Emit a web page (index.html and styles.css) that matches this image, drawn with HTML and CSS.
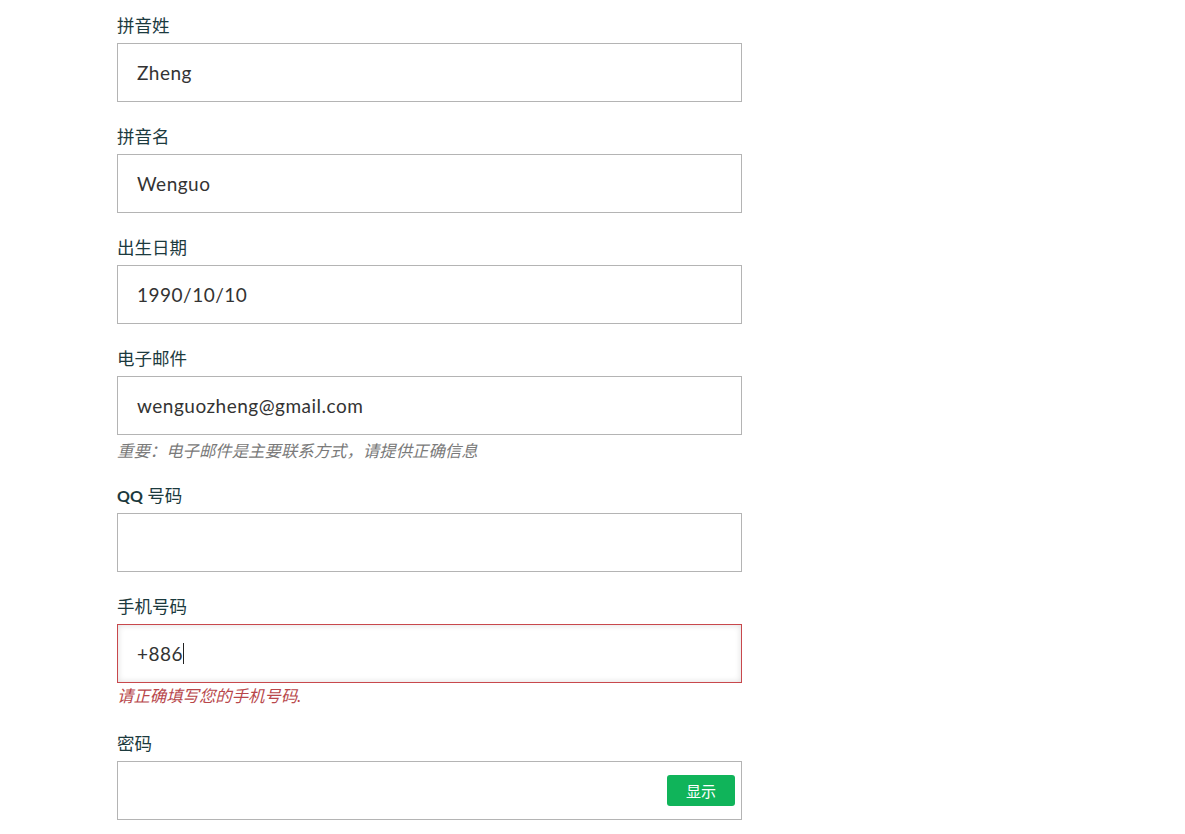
FILE: index.html
```html
<!DOCTYPE html>
<html lang="zh-CN">
<head>
<meta charset="utf-8">
<title>注册</title>
<link rel="stylesheet" href="styles.css">
</head>
<body>
<form class="form">
  <div class="field">
    <label class="label">拼音姓</label>
    <div class="input"><span class="value">Zheng</span></div>
  </div>
  <div class="field">
    <label class="label">拼音名</label>
    <div class="input"><span class="value">Wenguo</span></div>
  </div>
  <div class="field">
    <label class="label">出生日期</label>
    <div class="input"><span class="value">1990/10/10</span></div>
  </div>
  <div class="field field-hint">
    <label class="label">电子邮件</label>
    <div class="input"><span class="value">wenguozheng@gmail.com</span></div>
    <p class="hint">重要：电子邮件是主要联系方式，请提供正确信息</p>
  </div>
  <div class="field">
    <label class="label"><b class="qq">QQ</b> 号码</label>
    <div class="input"></div>
  </div>
  <div class="field field-error">
    <label class="label">手机号码</label>
    <div class="input input-error"><span class="value">+886</span><span class="caret"></span></div>
    <p class="error">请正确填写您的手机号码.</p>
  </div>
  <div class="field">
    <label class="label">密码</label>
    <div class="input input-pw"><button type="button" class="show">显示</button></div>
  </div>
</form>
</body>
</html>
```
FILE: styles.css
```css
html, body {
  margin: 0;
  padding: 0;
  background: #ffffff;
}
body {
  font-family: Lato, "Noto Sans CJK SC", sans-serif;
  color: #333333;
}
.form {
  width: 625px;
  padding: 15px 0 0 117px;
}
.field {
  display: flex;
  flex-direction: column;
  margin-bottom: 24px;
}
.label {
  font-size: 17.5px;
  line-height: 22px;
  color: #1c3a3e;
  margin-bottom: 6px;
}
.qq {
  font-weight: 700;
  font-size: 16px;
}
.input {
  box-sizing: border-box;
  height: 59px;
  border: 1px solid #b4b4b4;
  padding: 0 19px;
  display: flex;
  align-items: center;
  font-size: 19px;
  letter-spacing: 0.5px;
  color: #333333;
}
.value {
  line-height: 24px;
}
.caret {
  display: inline-block;
  width: 1px;
  height: 21px;
  background: #222;
  margin-left: 0;
}
.input-error {
  border-color: #c8484c;
  box-shadow: inset 0 0 6px rgba(0, 0, 0, 0.14);
}
.hint,
.error {
  margin: 7px 0 0;
  font-size: 16.4px;
  line-height: 18px;
  font-style: italic;
}
.hint {
  color: #7a7a7a;
}
.field-hint {
  margin-bottom: 25px;
}
.error {
  margin-top: 4px;
  color: #b8474b;
}
.field-error {
  margin-bottom: 28px;
}
.input-pw {
  justify-content: flex-end;
  padding-right: 6px;
}
.show {
  width: 68px;
  height: 31px;
  border: none;
  border-radius: 3px;
  background: #10b45a;
  color: #ffffff;
  font-family: "Noto Sans CJK SC", sans-serif;
  font-size: 15px;
  padding: 0;
}
```
